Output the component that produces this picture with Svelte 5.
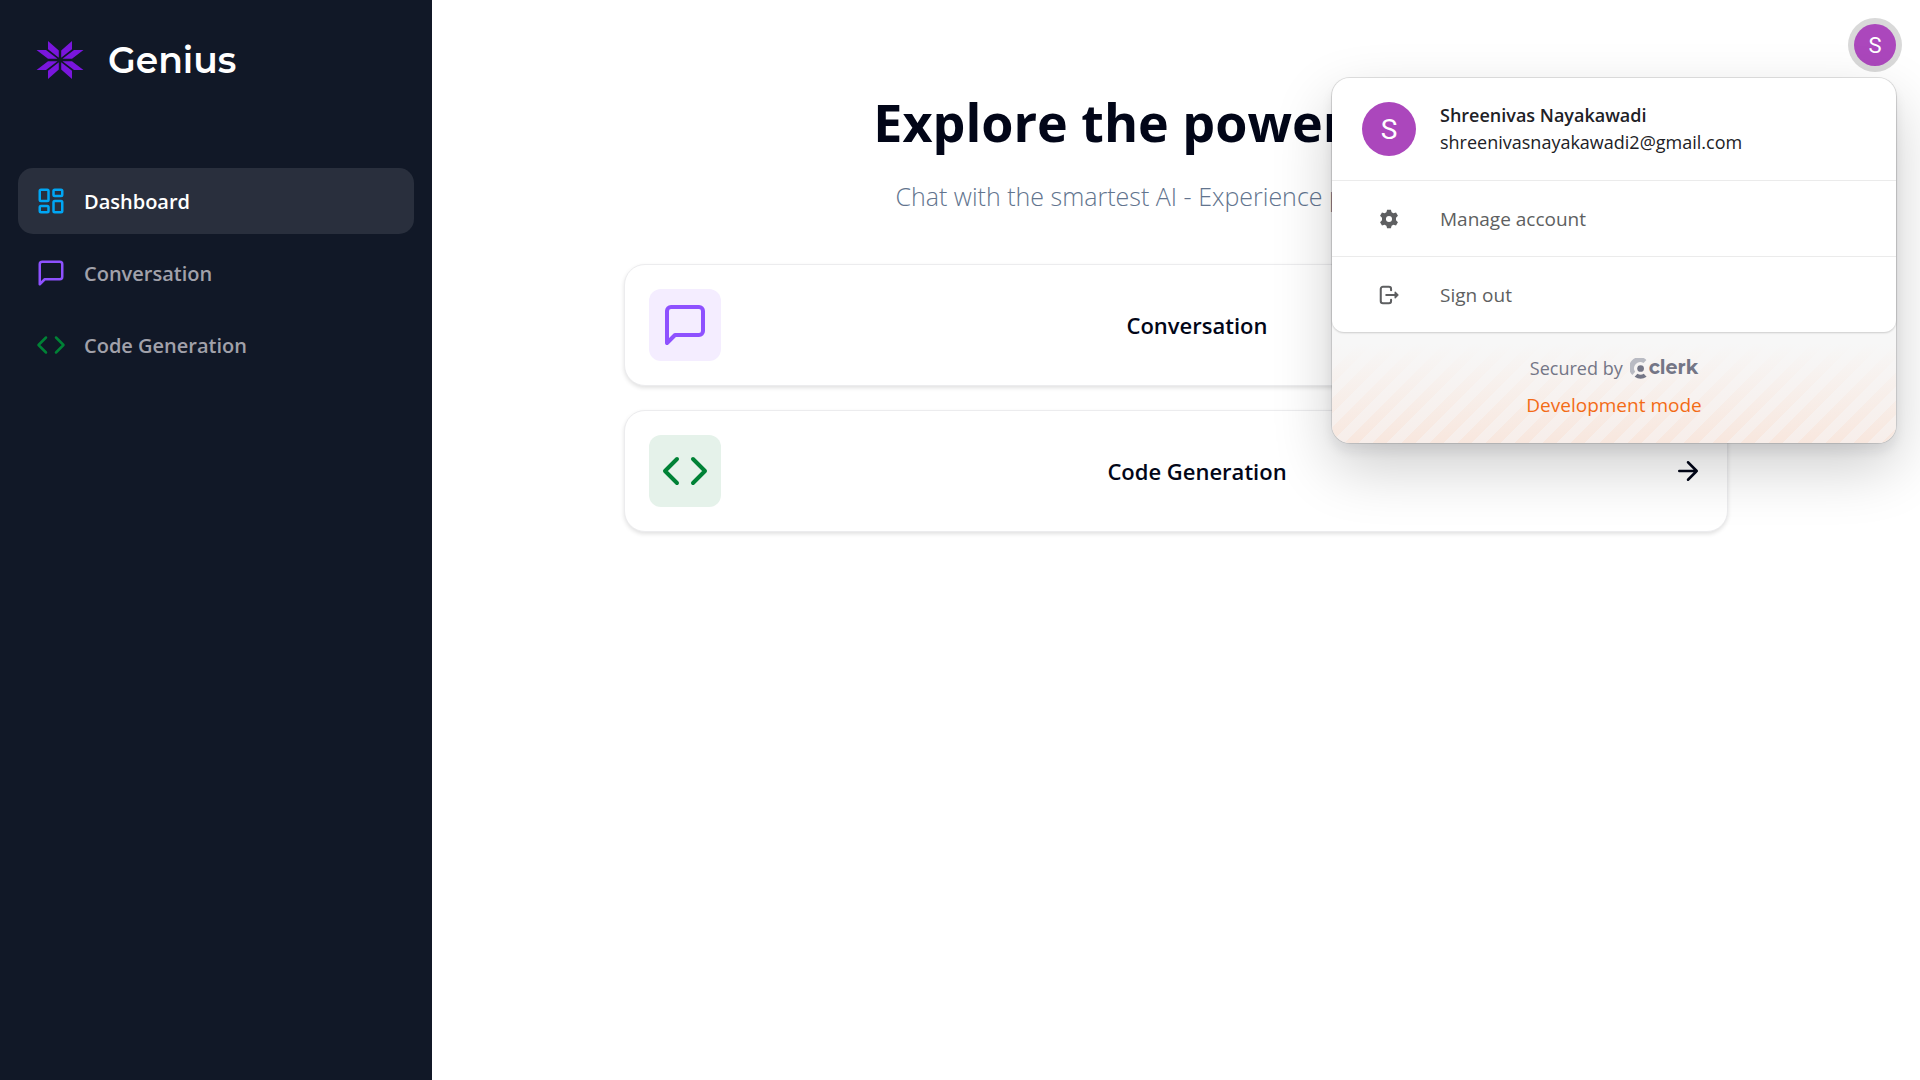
<script>
  const nav = [
    { label: 'Dashboard', icon: 'dashboard', active: true },
    { label: 'Conversation', icon: 'message' },
    { label: 'Code Generation', icon: 'code' }
  ];
  const tools = [
    { label: 'Conversation', icon: 'message' },
    { label: 'Code Generation', icon: 'code' }
  ];
  // The logo is one pair of petals mirrored into the four quadrants.
  const quadrants = ['1 1', '-1 1', '1 -1', '-1 -1'];
  let menuOpen = $state(true);
</script>

{#snippet icon(name)}
  <svg class="icon {name}" viewBox="0 0 24 24" aria-hidden="true">
    {#if name === 'dashboard'}
      <rect width="7" height="9" x="3" y="3" rx="1" />
      <rect width="7" height="5" x="14" y="3" rx="1" />
      <rect width="7" height="9" x="14" y="12" rx="1" />
      <rect width="7" height="5" x="3" y="16" rx="1" />
    {:else if name === 'message'}
      <path d="M21 15a2 2 0 0 1-2 2H7l-4 4V5a2 2 0 0 1 2-2h14a2 2 0 0 1 2 2z" />
    {:else if name === 'code'}
      <path d="m16 18 6-6-6-6M8 6l-6 6 6 6" />
    {:else}
      <path d="M5 12h14M12 5l7 7-7 7" />
    {/if}
  </svg>
{/snippet}

<div class="layout">
  <aside class="sidebar">
    <a class="brand" href="#home">
      <svg class="logo" viewBox="-24 -20 48 40" aria-hidden="true">
        {#each quadrants as q}
          <path transform="scale({q})" d="M-12 -19 -1.200 -9.500V-2.300L-12 -10.800zM-23.500 -10h9.500L-2.500 -1.200H-12z" />
        {/each}
      </svg>
      <span class="brand-name">Genius</span>
    </a>
    <nav>
      {#each nav as item}
        <a class="nav-link" class:active={item.active} href="#{item.icon}">
          {@render icon(item.icon)}
          <span>{item.label}</span>
        </a>
      {/each}
    </nav>
  </aside>

  <div class="page">
    <header>
      <button class="avatar-button" aria-label="Open user menu" onclick={() => (menuOpen = !menuOpen)}>
        <span class="avatar">S</span>
      </button>

      {#if menuOpen}
        <div class="popover">
          <div class="panel">
            <div class="row profile">
              <span class="avatar large">S</span>
              <div class="identity">
                <span class="name">Shreenivas Nayakawadi</span>
                <span>shreenivasnayakawadi2@gmail.com</span>
              </div>
            </div>
            <button class="row action">
              <svg viewBox="0 0 16 16" aria-hidden="true">
                <path fill="currentColor" fill-rule="evenodd" d="M6.600 1.200h2.800l.5 1.900 1.300.75 1.900-.55 1.400 2.400-1.400 1.400v1.800l1.400 1.400-1.400 2.400-1.900-.55-1.300.75-.5 1.900H6.600l-.5-1.900-1.300-.75-1.900.55-1.400-2.400 1.400-1.400V7.100L1.500 5.700l1.400-2.400 1.900.55 1.300-.75zM8 5.800a2.200 2.200 0 1 0 0 4.400 2.200 2.200 0 0 0 0-4.400z" />
              </svg>
              <span>Manage account</span>
            </button>
            <button class="row action">
              <svg viewBox="0 0 16 16" aria-hidden="true">
                <path fill="none" stroke="currentColor" stroke-width="1.500" stroke-linecap="round" d="M9.500 4.500V3.600A1.600 1.600 0 0 0 7.900 2H3.600A1.600 1.600 0 0 0 2 3.600v8.800A1.600 1.600 0 0 0 3.600 14h4.300a1.600 1.600 0 0 0 1.600-1.600v-.9M6 8h7" />
                <path fill="currentColor" stroke="currentColor" stroke-linejoin="round" d="m12.500 6 2 2-2 2z" />
              </svg>
              <span>Sign out</span>
            </button>
          </div>
          <footer>
            <p class="secured">
              Secured by
              <a class="clerk" href="#clerk">
                <svg viewBox="0 0 16 20" aria-hidden="true">
                  <path fill="#b9bbc3" d="M15.500 1.800 12.800 4.700A6 6 0 0 0 4.800 13.200L2.200 16.200A9.700 9.700 0 0 1 15.500 1.800z" />
                  <circle cx="10" cy="10" r="3.200" fill="#747686" />
                  <path fill="#747686" d="m4.300 17.800 2.700-2.700a6 6 0 0 0 6 0l2.700 2.700a10 10 0 0 1-11.400 0z" />
                </svg>
                <span>clerk</span>
              </a>
            </p>
            <p class="mode">Development mode</p>
          </footer>
        </div>
      {/if}
    </header>

    <main>
      <div class="intro">
        <h1>Explore the power of AI</h1>
        <p>Chat with the smartest AI - Experience power of AI</p>
      </div>
      <div class="cards">
        {#each tools as tool}
          <a class="card" href="#{tool.icon}">
            <span class="tile {tool.icon}">{@render icon(tool.icon)}</span>
            <span class="card-label">{tool.label}</span>
            {@render icon('arrow')}
          </a>
        {/each}
      </div>
    </main>
  </div>
</div>

<style>
  :global(body) {
    margin: 0;
    background: #fff;
  }
  .layout {
    display: grid;
    grid-template-columns: 432px 1fr;
    min-height: 100vh;
    font-family: 'Open Sans', 'Noto Sans', sans-serif;
    color: #020618;
  }
  a {
    color: inherit;
    text-decoration: none;
  }
  button {
    border: 0;
    padding: 0;
    background: none;
    font: inherit;
    color: inherit;
    cursor: pointer;
  }
  p,
  h1 {
    margin: 0;
  }
  .icon {
    width: 30px;
    height: 30px;
    fill: none;
    stroke: currentColor;
    stroke-width: 2;
    stroke-linecap: round;
    stroke-linejoin: round;
  }
  .icon.dashboard { color: #00a6f4; }
  .icon.message { color: #8e51ff; }
  .icon.code { color: #008236; }

  .sidebar {
    box-sizing: border-box;
    padding: 24px 18px;
    background: #111827;
    color: #fff;
  }
  .brand {
    display: flex;
    align-items: center;
    gap: 24px;
    height: 72px;
    padding-left: 18px;
    margin-bottom: 72px;
  }
  .logo {
    width: 48px;
    height: 40px;
    fill: #7a16dd;
  }
  .brand-name {
    font-family: Montserrat, 'Open Sans', sans-serif;
    font-size: 36px;
    font-weight: 600;
  }
  nav {
    display: flex;
    flex-direction: column;
    gap: 6px;
  }
  .nav-link {
    display: flex;
    align-items: center;
    gap: 18px;
    height: 66px;
    padding: 0 18px;
    border-radius: 15px;
    font-size: 20px;
    font-weight: 600;
    color: #a1a1aa;
  }
  .nav-link.active {
    background: #292f3d;
    color: #fff;
  }

  .page {
    min-width: 0;
  }
  header {
    position: relative;
    display: flex;
    justify-content: flex-end;
    padding: 18px;
  }
  .avatar-button {
    padding: 6px;
    border-radius: 50%;
    background: #d9d9d9;
  }
  .avatar {
    display: flex;
    align-items: center;
    justify-content: center;
    width: 42px;
    height: 42px;
    border-radius: 50%;
    background: #ab47bc;
    color: #fff;
    font-family: Roboto, sans-serif;
    font-size: 22px;
  }
  .avatar.large {
    width: 54px;
    height: 54px;
    font-size: 28px;
  }
  .popover {
    position: absolute;
    z-index: 1;
    top: 78px;
    right: 24px;
    width: 564px;
    border-radius: 18px;
    background: #f7f7f7;
    box-shadow:
      0 0 0 1px rgba(0, 0, 0, 0.1),
      0 8px 12px rgba(25, 28, 33, 0.08),
      0 24px 60px rgba(0, 0, 0, 0.2);
    color: #212126;
    font-size: 18px;
  }
  .panel {
    position: relative;
    overflow: hidden;
    border-radius: 18px 18px 12px 12px;
    background: #fff;
    box-shadow: 0 1px 2px rgba(0, 0, 0, 0.18);
  }
  .row {
    box-sizing: border-box;
    display: flex;
    align-items: center;
    gap: 24px;
    width: 100%;
    padding: 24px 30px;
  }
  .identity {
    display: flex;
    flex-direction: column;
    line-height: 27px;
  }
  .name {
    font-weight: 600;
  }
  .action {
    height: 76px;
    border-top: 1px solid #ebebeb;
    color: #5e5f61;
    font-size: 19px;
    font-weight: 500;
  }
  .action svg {
    width: 22px;
    height: 22px;
    padding: 0 16px;
  }
  footer {
    display: flex;
    flex-direction: column;
    align-items: center;
    gap: 11px;
    padding: 24px 0;
    border-radius: 0 0 18px 18px;
    background:
      linear-gradient(#f7f7f7 10%, rgba(247, 247, 247, 0)),
      repeating-linear-gradient(-45deg, #f8e7de 0 10px, #f7eeea 10px 20px);
    font-weight: 500;
  }
  .secured {
    display: flex;
    align-items: center;
    gap: 7px;
    color: #747686;
    font-size: 18px;
    line-height: 24px;
  }
  .clerk {
    display: flex;
    align-items: center;
    gap: 2px;
    font-family: Montserrat, Lato, sans-serif;
    font-size: 19px;
    font-weight: 700;
  }
  .clerk svg {
    width: 17px;
    height: 21px;
  }
  .mode {
    color: #f36b16;
    font-size: 19px;
    line-height: 28px;
  }

  .intro {
    display: flex;
    flex-direction: column;
    align-items: center;
    gap: 21px;
    margin-bottom: 47px;
    text-align: center;
  }
  h1 {
    font-size: 52px;
    font-weight: 700;
    line-height: 64px;
  }
  .intro p {
    color: #62748e;
    font-size: 25px;
    font-weight: 300;
    line-height: 42px;
  }
  .cards {
    display: flex;
    flex-direction: column;
    gap: 24px;
    padding: 0 192px;
  }
  .card {
    display: flex;
    align-items: center;
    justify-content: space-between;
    padding: 24px;
    border: 1px solid #ececee;
    border-radius: 21px;
    background: #fff;
    box-shadow: 0 2px 4px rgba(0, 0, 0, 0.12);
    font-size: 22px;
    font-weight: 600;
  }
  .tile {
    display: flex;
    padding: 12px;
    border-radius: 12px;
  }
  .tile .icon {
    width: 48px;
    height: 48px;
  }
  .tile.message { background: #f4edff; }
  .tile.code { background: #e5f2ea; }
</style>
